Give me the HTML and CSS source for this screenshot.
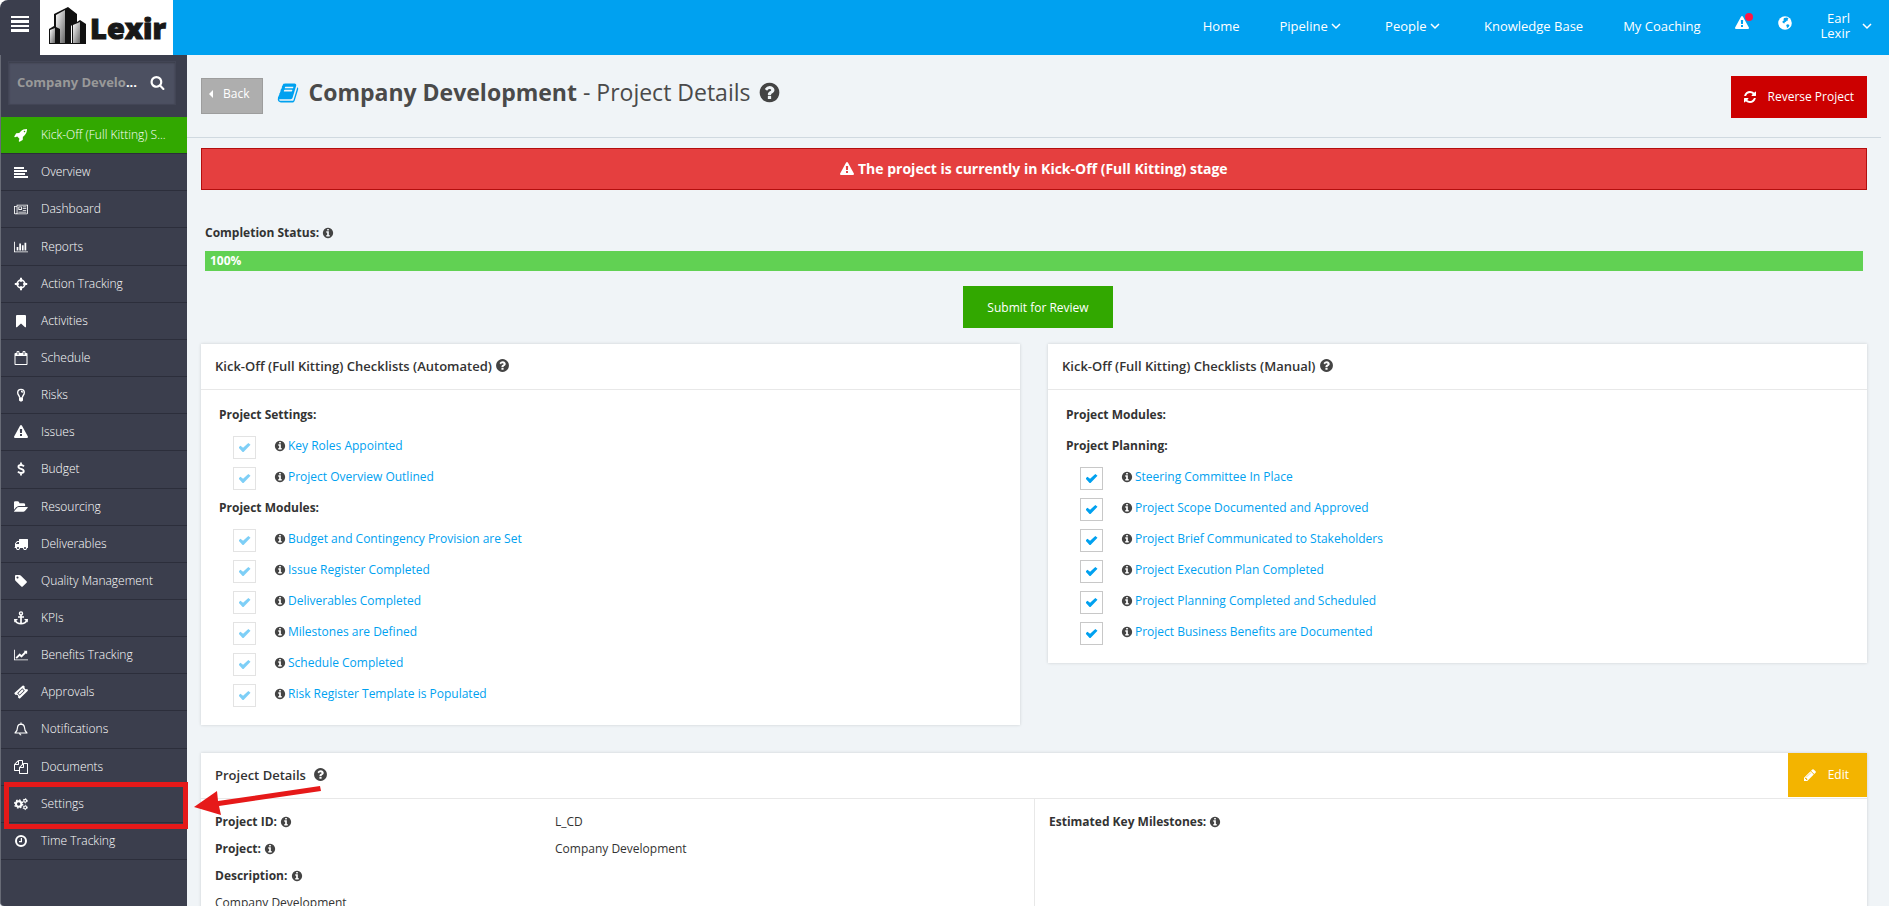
FILE: index.html
```html
<!DOCTYPE html>
<html lang="en">
<head>
    <meta charset="UTF-8">
    <meta name="viewport" content="width=device-width, initial-scale=1.0">
    <title>Company Development - Project Details</title>
    <link rel="stylesheet" href="styles.css">
</head>
<body>

<svg class="sprite" aria-hidden="true">
    <symbol id="search" viewBox="0 0 1792 1792"><path d="M1216 832q0-185-131.5-316.5t-316.5-131.5-316.5 131.5-131.5 316.5 131.5 316.5 316.5 131.5 316.5-131.5 131.5-316.5zm512 832q0 52-38 90t-90 38q-54 0-90-38l-343-342q-179 124-399 124-143 0-273.5-55.5t-225-150-150-225-55.5-273.5 55.5-273.5 150-225 225-150 273.5-55.5 273.5 55.5 225 150 150 225 55.5 273.5q0 220-124 399l343 343q37 37 37 90z"/></symbol>
    <symbol id="question" viewBox="0 0 1792 1792"><path d="M1024 1376v-192q0-14-9-23t-23-9h-192q-14 0-23 9t-9 23v192q0 14 9 23t23 9h192q14 0 23-9t9-23zm256-672q0-88-55.5-163t-138.5-116-170-41q-243 0-371 213-15 24 8 42l132 100q7 6 19 6 16 0 25-12 53-68 86-92 34-24 86-24 48 0 85.5 26t37.5 59q0 38-20 61t-68 45q-63 28-115.5 86.5t-52.5 125.5v36q0 14 9 23t23 9h192q14 0 23-9t9-23q0-19 21.5-49.5t54.5-49.5q32-18 49-28.5t46-35 44.5-48 28-60.5 12.5-81zm384 192q0 209-103 385.5t-279.5 279.5-385.5 103-385.5-103-279.5-279.5-103-385.5 103-385.5 279.5-279.5 385.5-103 385.5 103 279.5 279.5 103 385.5z"/></symbol>
    <symbol id="info" viewBox="0 0 1792 1792"><path d="M1152 1376v-160q0-14-9-23t-23-9h-96v-512q0-14-9-23t-23-9h-320q-14 0-23 9t-9 23v160q0 14 9 23t23 9h96v320h-96q-14 0-23 9t-9 23v160q0 14 9 23t23 9h448q14 0 23-9t9-23zm-128-896v-160q0-14-9-23t-23-9h-192q-14 0-23 9t-9 23v160q0 14 9 23t23 9h192q14 0 23-9t9-23zm640 416q0 209-103 385.5t-279.5 279.5-385.5 103-385.5-103-279.5-279.5-103-385.5 103-385.5 279.5-279.5 385.5-103 385.5 103 279.5 279.5 103 385.5z"/></symbol>
    <symbol id="warning" viewBox="0 0 1792 1792"><path d="M1024 1375v-190q0-14-9.5-23.5t-22.5-9.5h-192q-13 0-22.5 9.5t-9.5 23.5v190q0 14 9.5 23.5t22.5 9.5h192q13 0 22.5-9.5t9.5-23.5zm-2-374l18-459q0-12-10-19-13-11-24-11h-220q-11 0-24 11-10 7-10 21l17 457q0 10 10 16.5t24 6.5h185q14 0 23.5-6.5t10.5-16.5zm-14-934l768 1408q35 63-2 126-17 29-46.5 46t-63.5 17h-1536q-34 0-63.5-17t-46.5-46q-37-63-2-126l768-1408q17-31 47-49t65-18 65 18 47 49z"/></symbol>
    <symbol id="refresh" viewBox="0 0 1792 1792"><path d="M1639 1056q0 5-1 7-64 268-268 434.5t-478 166.5q-146 0-282.5-55t-243.5-157l-129 129q-19 19-45 19t-45-19-19-45v-448q0-26 19-45t45-19h448q26 0 45 19t19 45-19 45l-137 137q71 66 161 102t187 36q134 0 250-65t186-179q11-17 53-117 8-23 30-23h192q13 0 22.5 9.5t9.5 22.5zm25-800v448q0 26-19 45t-45 19h-448q-26 0-45-19t-19-45 19-45l138-138q-148-137-349-137-134 0-250 65t-186 179q-11 17-53 117-8 23-30 23h-199q-13 0-22.5-9.5t-9.5-22.5v-7q65-268 270-434.5t480-166.5q146 0 284 55.5t245 156.5l130-129q19-19 45-19t45 19 19 45z"/></symbol>
    <symbol id="pencil" viewBox="0 0 1792 1792"><path d="M491 1536l91-91-235-235-91 91v107h128v128h107zm523-928q0-22-22-22-10 0-17 7l-542 542q-7 7-7 17 0 22 22 22 10 0 17-7l542-542q7-7 7-17zm-54-192l416 416-832 832h-416v-416zm683 96q0 53-37 90l-166 166-416-416 166-165q36-38 90-38 53 0 91 38l235 234q37 39 37 91z"/></symbol>
    <symbol id="book" viewBox="0 0 1792 1792"><path d="M1703 478q40 57 18 129l-275 906q-19 64-76.5 107.5t-122.5 43.5h-923q-77 0-148.5-53.5t-99.5-131.5q-24-67-2-127 0-4 3-27t4-37q1-8-3-21.5t-3-19.5q2-11 8-21t16.5-23.5 16.5-23.5q23-38 45-91.5t30-91.5q3-10 .5-30t-.5-28q3-11 17-28t17-23q21-36 42-92t25-90q1-9-2.5-32t.5-28q4-13 22-30.5t22-22.5q19-26 42.5-84.5t27.5-96.5q1-8-3-25.5t-2-26.5q2-8 9-18t18-23 17-21q8-12 16.5-30.5t15-35 16-36 19.5-32 26.5-23.5 36-11.5 47.5 5.5l-1 3q38-9 51-9h761q74 0 114 56t18 130l-274 906q-36 119-71.5 153.5t-128.5 34.5h-869q-27 0-38 15-11 16-1 43 24 70 144 70h923q29 0 56-15.5t35-41.5l300-987q7-22 5-57 38 15 59 43zm-1064 2q-4 13 2 22.5t20 9.5h608q13 0 25.5-9.5t16.5-22.5l21-64q4-13-2-22.5t-20-9.5h-608q-13 0-25.5 9.5t-16.5 22.5zm-83 256q-4 13 2 22.5t20 9.5h608q13 0 25.5-9.5t16.5-22.5l21-64q4-13-2-22.5t-20-9.5h-608q-13 0-25.5 9.5t-16.5 22.5z"/></symbol>
    <symbol id="rocket" viewBox="0 0 1792 1792"><path d="M1440 448q0-40-28-68t-68-28-68 28-28 68 28 68 68 28 68-28 28-68zm224-288q0 249-75.5 430.5t-253.5 360.5q-81 80-195 176l-20 379q-2 16-16 26l-384 224q-7 4-16 4-12 0-23-9l-64-64q-13-14-8-32l85-276-281-281-276 85q-3 1-9 1-14 0-23-9l-64-64q-17-19-5-39l224-384q10-14 26-16l379-20q96-114 176-195 188-187 358-258t431-71q14 0 24 9.5t10 22.5z"/></symbol>
    <symbol id="align-left" viewBox="0 0 14 14"><path d="M0 2h10v2H0zM0 5h13v2H0zM0 8h11v2H0zM0 11h14v2H0z"/></symbol>
    <symbol id="newspaper" viewBox="0 0 16 14"><path fill-rule="evenodd" d="M3 2h13v9.500q0 1.500-1.500 1.500h-13q-1.500 0-1.500-1.500V3.500h3zM4 3v9h11V3zM1 4.500v7q0 .5 1 .5t1-.5v-7zM5 4h4v4H5zM6 5v2h2V5zM10 4h4v1h-4zM10 6h4v1h-4zM10 8h4v1h-4zM5 10h9v1H5z"/></symbol>
    <symbol id="bar-chart" viewBox="0 0 2048 1792"><path d="M640 896v512h-256v-512h256zm384-512v1024h-256v-1024h256zm1024 1152v128h-2048v-1536h128v1408h1920zm-640-896v768h-256v-768h256zm384-384v1152h-256v-1152h256z"/></symbol>
    <symbol id="crosshairs" viewBox="0 0 14 14"><circle cx="7" cy="7" r="3.800" fill="none" stroke="currentColor" stroke-width="1.700"/><path d="M6 .8h2v4H6zM6 9.200h2v4H6zM.8 6h4v2h-4zM9.200 6h4v2h-4z"/></symbol>
    <symbol id="bookmark" viewBox="0 0 14 14"><path d="M3 1h8q1 0 1 1v11q-.5.600-1.200 0L7 9.500 3.200 13q-.7.600-1.200 0V2q0-1 1-1z"/></symbol>
    <symbol id="calendar" viewBox="0 0 1792 1792"><path d="M192 1664h1408v-1024h-1408v1024zm384-1216v-288q0-14-9-23t-23-9h-64q-14 0-23 9t-9 23v288q0 14 9 23t23 9h64q14 0 23-9t9-23zm768 0v-288q0-14-9-23t-23-9h-64q-14 0-23 9t-9 23v288q0 14 9 23t23 9h64q14 0 23-9t9-23zm384-64v1280q0 52-38 90t-90 38h-1408q-52 0-90-38t-38-90v-1280q0-52 38-90t90-38h128v-96q0-66 47-113t113-47h64q66 0 113 47t47 113v96h384v-96q0-66 47-113t113-47h64q66 0 113 47t47 113v96h128q52 0 90 38t38 90z"/></symbol>
    <symbol id="bulb" viewBox="0 0 14 14"><path fill="none" stroke="currentColor" stroke-width="1.400" d="M5.600 9.500C5.600 7.500 3.700 7 3.700 4.700a3.300 3.300 0 0 1 6.600 0C10.300 7 8.400 7.500 8.400 9.500M7 3.300q1.400 0 1.500 1.300"/><path d="M5 9.200h4v3.300L7.800 13.500H6.200L5 12.500z"/></symbol>
    <symbol id="dollar" viewBox="0 0 14 14"><path fill="none" stroke="currentColor" stroke-width="1.800" d="M10 4.300Q8.700 3 7 3 4.400 3 4.400 4.800 4.400 6.300 7 6.900 9.800 7.600 9.800 9.300 9.800 11 7 11 5.200 11 3.900 9.700M7 .5v2.500M7 11v2.500"/></symbol>
    <symbol id="folder" viewBox="0 0 1850 1792"><path d="M1815 952q0 31-31 66l-336 396q-43 51-120.500 86.500t-143.500 35.500h-1088q-34 0-60.500-13t-26.500-43q0-31 31-66l336-396q43-51 120.500-86.500t143.500-35.500h1088q34 0 60.500 13t26.500 43zm-343-344v160h-832q-94 0-197 47.500t-164 119.500l-337 396-5 6q0-4-.5-12.500t-.5-12.500v-960q0-92 66-158t158-66h320q92 0 158 66t66 158v32h544q92 0 158 66t66 158z"/></symbol>
    <symbol id="truck" viewBox="0 0 1792 1792"><path d="M640 1408q0-52-38-90t-90-38-90 38-38 90 38 90 90 38 90-38 38-90zm-384-512h384v-256h-158q-13 0-22 9l-195 195q-9 9-9 22v30zm1280 512q0-52-38-90t-90-38-90 38-38 90 38 90 90 38 90-38 38-90zm256-1088v1024q0 15-4 26.500t-13.500 18.500-16.500 11.500-23.500 6-22.500 2-25.500 0-22.500-.5q0 106-75 181t-181 75-181-75-75-181h-384q0 106-75 181t-181 75-181-75-75-181h-64q-3 0-22.500.5t-25.500 0-22.500-2-23.500-6-16.500-11.500-13.500-18.500-4-26.500q0-26 19-45t45-19v-320q0-8-.5-35t0-38 2.500-34.500 6.500-37 14-30.500 22.500-30l198-198q19-19 50.500-32t58.500-13h160v-192q0-26 19-45t45-19h1024q26 0 45 19t19 45z"/></symbol>
    <symbol id="tag" viewBox="0 0 1792 1792"><path d="M576 448q0-53-37.500-90.500t-90.500-37.500-90.500 37.500-37.500 90.500 37.500 90.500 90.500 37.500 90.500-37.500 37.500-90.500zm1067 576q0 53-37 90l-491 492q-39 37-91 37-53 0-90-37l-715-716q-38-37-64.500-101t-26.500-117v-416q0-52 38-90t90-38h416q53 0 117 26.500t102 64.500l715 714q37 39 37 91z"/></symbol>
    <symbol id="anchor" viewBox="0 0 14 14"><path fill="none" stroke="currentColor" stroke-width="1.700" d="M7 4v8.500M4 6h6M1.500 9.500Q2.500 12.700 7 12.700T12.500 9.500"/><circle cx="7" cy="2.400" r="1.500" fill="none" stroke="currentColor" stroke-width="1.400"/><path d="M0 8h4L.3 11.600zM14 8h-4l3.700 3.600z"/></symbol>
    <symbol id="line-chart" viewBox="0 0 2048 1792"><path d="M2048 1536v128h-2048v-1536h128v1408h1920zm-128-1248v435q0 21-19.500 29.500t-35.500-7.500l-121-121-633 633q-10 10-23 10t-23-10l-233-233-416 416-192-192 585-585q10-10 23-10t23 10l233 233 464-464-121-121q-16-16-7.500-35.500t29.500-19.500h435q14 0 23 9t9 23z"/></symbol>
    <symbol id="ticket" viewBox="0 0 14 14"><path fill-rule="evenodd" d="M8.500.7q.7-.6 1.300 0l1 1q-.7 1.100.2 2t2 .2l.6.700q.6.600 0 1.300L6.200 13.300q-.7.600-1.300 0l-1-1q.7-1.100-.2-2t-2-.2l-1-1q-.6-.6 0-1.300zM8.300 3.200L3.200 8.300l2.500 2.500 5.100-5.100zM8.300 4.300l1.400 1.400-4 4-1.400-1.400z"/></symbol>
    <symbol id="bell" viewBox="0 0 14 14"><path fill="none" stroke="currentColor" stroke-width="1.200" stroke-linejoin="round" d="M1 11h12Q10.500 9 10.500 5.500 10.200 2.300 7 2.100 3.800 2.300 3.500 5.500 3.500 9 1 11zM5.700 11.500q.2 1.500 1.500 1.500M7 2V.6"/></symbol>
    <symbol id="files" viewBox="0 0 1792 1792"><path d="M1696 384q40 0 68 28t28 68v1216q0 40-28 68t-68 28h-960q-40 0-68-28t-28-68v-288h-544q-40 0-68-28t-28-68v-672q0-40 20-88t48-76l408-408q28-28 76-48t88-20h416q40 0 68 28t28 68v328q68-40 128-40h416zm-544 213l-299 299h299v-299zm-640-384l-299 299h299v-299zm196 647l316-316v-416h-384v416q0 40-28 68t-68 28h-416v640h512v-256q0-40 20-88t48-76zm956 804v-1152h-384v416q0 40-28 68t-68 28h-416v640h896z"/></symbol>
    <symbol id="cogs" viewBox="0 0 15 14"><g fill="none" stroke="currentColor"><circle cx="5" cy="7" r="2.900" stroke-width="2.200"/><circle cx="5" cy="7" r="4.300" stroke-width="1.400" stroke-dasharray="1.700 1.677"/><circle cx="12" cy="3.500" r="1.500" stroke-width="1.200"/><circle cx="12" cy="3.500" r="2.300" stroke-width="1" stroke-dasharray="1.200 1.209"/><circle cx="12" cy="10.700" r="1.500" stroke-width="1.200"/><circle cx="12" cy="10.700" r="2.300" stroke-width="1" stroke-dasharray="1.200 1.209"/></g></symbol>
    <symbol id="clock" viewBox="0 0 14 14"><circle cx="7" cy="7" r="5" fill="none" stroke="currentColor" stroke-width="2"/><path fill="none" stroke="currentColor" stroke-width="1.200" d="M7.400 4v3.600H5"/></symbol>
    <symbol id="globe" viewBox="0 0 14 14"><circle cx="7" cy="7" r="6.800"/><path fill="#00a1f0" d="M6 2l3-.6 1.500 1-.8.800.3 1.200-1.400.4-.6 1-1.400.4.200 1H5.600L4.400 6.200l.3-1.200 1.200-.6L5.500 3.300zM8.500 8.800l1.400-.6 1.500.7-.4 1.500-1.400 1.400-.6.500-.2-1.500-.6-1.200z"/></symbol>
    <symbol id="chevron" viewBox="0 0 10 10"><path fill="none" stroke="currentColor" stroke-width="1.500" d="M1 3l4 4 4-4"/></symbol>
    <symbol id="caret" viewBox="0 0 6 10"><path d="M5 1v8L1 5z"/></symbol>
    <symbol id="menu" viewBox="0 0 18 16"><path d="M0 0h18v2H0zM0 4h18v3H0zM0 9h18v2H0zM0 13h18v3H0z"/></symbol>
</svg>

<header class="topbar">
    <button class="menu-toggle" aria-label="Toggle menu"><svg><use href="#menu"/></svg></button>
    <a class="logo" href="#">
        <svg class="logo-mark" viewBox="0 0 38 38" aria-hidden="true">
            <defs>
                <linearGradient id="steel" x1="0" y1="0" x2="1" y2="1">
                    <stop offset="0" stop-color="#fff"/>
                    <stop offset="1" stop-color="#666"/>
                </linearGradient>
            </defs>
            <path fill="#111" d="M5 7L19 0l9 7v8l3-2 6 4v20H5z"/>
            <path fill="url(#steel)" d="M7 8l9-5v33H7z"/>
            <path fill="#111" d="M0 22l5-3 6 3v15H0z"/>
            <path fill="url(#steel)" d="M1 23l5-2v15H1z"/>
            <path fill="#fff" d="M22 36h1V18l-1 1z"/>
            <path fill="url(#steel)" d="M24 18l7-3v21h-7z"/>
        </svg>
        <span class="logo-text">Lexir</span>
    </a>
    <nav class="topnav">
        <a href="#">Home</a>
        <a class="has-menu" href="#">Pipeline <svg class="chevron"><use href="#chevron"/></svg></a>
        <a class="has-menu" href="#">People <svg class="chevron"><use href="#chevron"/></svg></a>
        <a href="#">Knowledge Base</a>
        <a href="#">My Coaching</a>
    </nav>
    <div class="top-tools">
        <a class="alerts" href="#" aria-label="Alerts"><svg class="icon"><use href="#warning"/></svg><span class="dot"></span></a>
        <a href="#" aria-label="Language"><svg class="icon"><use href="#globe"/></svg></a>
        <a class="user" href="#"><span>Earl<br>Lexir</span><svg class="chevron"><use href="#chevron"/></svg></a>
    </div>
</header>

<div class="layout">
    <aside class="sidebar">
        <form class="search">
            <button type="button" class="project-pick"><span>Company Develo</span>...</button>
            <button type="button" class="search-btn" aria-label="Search"><svg><use href="#search"/></svg></button>
        </form>
        <ul class="side-menu">
            <li class="stage"><a href="#"><svg class="icon"><use href="#rocket"/></svg>Kick-Off (Full Kitting) S...</a></li>
            <li><a href="#"><svg class="icon"><use href="#align-left"/></svg>Overview</a></li>
            <li><a href="#"><svg class="icon"><use href="#newspaper"/></svg>Dashboard</a></li>
            <li><a href="#"><svg class="icon"><use href="#bar-chart"/></svg>Reports</a></li>
            <li><a href="#"><svg class="icon"><use href="#crosshairs"/></svg>Action Tracking</a></li>
            <li><a href="#"><svg class="icon"><use href="#bookmark"/></svg>Activities</a></li>
            <li><a href="#"><svg class="icon"><use href="#calendar"/></svg>Schedule</a></li>
            <li><a href="#"><svg class="icon"><use href="#bulb"/></svg>Risks</a></li>
            <li><a href="#"><svg class="icon"><use href="#warning"/></svg>Issues</a></li>
            <li><a href="#"><svg class="icon"><use href="#dollar"/></svg>Budget</a></li>
            <li><a href="#"><svg class="icon"><use href="#folder"/></svg>Resourcing</a></li>
            <li><a href="#"><svg class="icon"><use href="#truck"/></svg>Deliverables</a></li>
            <li><a href="#"><svg class="icon"><use href="#tag"/></svg>Quality Management</a></li>
            <li><a href="#"><svg class="icon"><use href="#anchor"/></svg>KPIs</a></li>
            <li><a href="#"><svg class="icon"><use href="#line-chart"/></svg>Benefits Tracking</a></li>
            <li><a href="#"><svg class="icon"><use href="#ticket"/></svg>Approvals</a></li>
            <li><a href="#"><svg class="icon"><use href="#bell"/></svg>Notifications</a></li>
            <li><a href="#"><svg class="icon"><use href="#files"/></svg>Documents</a></li>
            <li class="marked"><a href="#"><svg class="icon"><use href="#cogs"/></svg>Settings</a>
                <svg class="arrow" viewBox="0 0 128 36" aria-hidden="true"><path d="M0 21L23 5l1 10L126 0l1 5L25 20l2 9z"/></svg>
            </li>
            <li><a href="#"><svg class="icon"><use href="#clock"/></svg>Time Tracking</a></li>
        </ul>
    </aside>

    <main class="content">
        <div class="page-head">
            <a class="btn-back" href="#"><svg><use href="#caret"/></svg>Back</a>
            <h1><svg class="book"><use href="#book"/></svg><strong>Company Development</strong> - Project Details <svg class="help"><use href="#question"/></svg></h1>
            <button class="btn btn-red"><svg class="icon"><use href="#refresh"/></svg>Reverse Project</button>
        </div>

        <div class="page-body">
            <div class="alert"><svg class="icon"><use href="#warning"/></svg> The project is currently in Kick-Off (Full Kitting) stage</div>

            <div class="status">
                <p class="label">Completion Status: <svg class="info"><use href="#info"/></svg></p>
                <div class="progress"><div class="progress-bar" style="width: 100%">100%</div></div>
            </div>
            <div class="actions">
                <button class="btn btn-green">Submit for Review</button>
            </div>

            <div class="checklists">
                <section class="panel">
                    <h2>Kick-Off (Full Kitting) Checklists (Automated) <svg class="help"><use href="#question"/></svg></h2>
                    <div class="checks">
                        <h3>Project Settings:</h3>
                        <div class="check"><input type="checkbox" aria-labelledby="a1" checked disabled><svg class="info"><use href="#info"/></svg><a id="a1" href="#">Key Roles Appointed</a></div>
                        <div class="check"><input type="checkbox" aria-labelledby="a2" checked disabled><svg class="info"><use href="#info"/></svg><a id="a2" href="#">Project Overview Outlined</a></div>
                        <h3>Project Modules:</h3>
                        <div class="check"><input type="checkbox" aria-labelledby="a3" checked disabled><svg class="info"><use href="#info"/></svg><a id="a3" href="#">Budget and Contingency Provision are Set</a></div>
                        <div class="check"><input type="checkbox" aria-labelledby="a4" checked disabled><svg class="info"><use href="#info"/></svg><a id="a4" href="#">Issue Register Completed</a></div>
                        <div class="check"><input type="checkbox" aria-labelledby="a5" checked disabled><svg class="info"><use href="#info"/></svg><a id="a5" href="#">Deliverables Completed</a></div>
                        <div class="check"><input type="checkbox" aria-labelledby="a6" checked disabled><svg class="info"><use href="#info"/></svg><a id="a6" href="#">Milestones are Defined</a></div>
                        <div class="check"><input type="checkbox" aria-labelledby="a7" checked disabled><svg class="info"><use href="#info"/></svg><a id="a7" href="#">Schedule Completed</a></div>
                        <div class="check"><input type="checkbox" aria-labelledby="a8" checked disabled><svg class="info"><use href="#info"/></svg><a id="a8" href="#">Risk Register Template is Populated</a></div>
                    </div>
                </section>

                <section class="panel">
                    <h2>Kick-Off (Full Kitting) Checklists (Manual) <svg class="help"><use href="#question"/></svg></h2>
                    <div class="checks">
                        <h3>Project Modules:</h3>
                        <h3>Project Planning:</h3>
                        <div class="check"><input type="checkbox" aria-labelledby="m1" checked><svg class="info"><use href="#info"/></svg><a id="m1" href="#">Steering Committee In Place</a></div>
                        <div class="check"><input type="checkbox" aria-labelledby="m2" checked><svg class="info"><use href="#info"/></svg><a id="m2" href="#">Project Scope Documented and Approved</a></div>
                        <div class="check"><input type="checkbox" aria-labelledby="m3" checked><svg class="info"><use href="#info"/></svg><a id="m3" href="#">Project Brief Communicated to Stakeholders</a></div>
                        <div class="check"><input type="checkbox" aria-labelledby="m4" checked><svg class="info"><use href="#info"/></svg><a id="m4" href="#">Project Execution Plan Completed</a></div>
                        <div class="check"><input type="checkbox" aria-labelledby="m5" checked><svg class="info"><use href="#info"/></svg><a id="m5" href="#">Project Planning Completed and Scheduled</a></div>
                        <div class="check"><input type="checkbox" aria-labelledby="m6" checked><svg class="info"><use href="#info"/></svg><a id="m6" href="#">Project Business Benefits are Documented</a></div>
                    </div>
                </section>
            </div>

            <section class="panel details">
                <div class="panel-head">
                    <h2>Project Details &nbsp;<svg class="help"><use href="#question"/></svg></h2>
                    <button class="btn btn-yellow"><svg class="icon"><use href="#pencil"/></svg>Edit</button>
                </div>
                <div class="detail-cols">
                    <dl>
                        <div><dt>Project ID: <svg class="info"><use href="#info"/></svg></dt><dd>L_CD</dd></div>
                        <div><dt>Project: <svg class="info"><use href="#info"/></svg></dt><dd>Company Development</dd></div>
                        <div><dt>Description: <svg class="info"><use href="#info"/></svg></dt></div>
                        <div><dd>Company Development</dd></div>
                    </dl>
                    <dl>
                        <div><dt>Estimated Key Milestones: <svg class="info"><use href="#info"/></svg></dt></div>
                    </dl>
                </div>
            </section>
        </div>
    </main>
</div>

</body>
</html>
```
FILE: styles.css
```css
* {
    box-sizing: border-box;
    margin: 0;
    padding: 0;
}

html {
    background: #fff;
}

body {
    font-family: "Open Sans", sans-serif;
    font-size: 12px;
    line-height: 20px;
    color: #333;
    background: #f0f4f7;
    height: 100vh;
    margin-right: 3px;
    overflow: hidden;
    display: flex;
    flex-direction: column;
}

a {
    color: #00a1f0;
    text-decoration: none;
}

button {
    font: inherit;
    border: none;
    cursor: pointer;
}

svg {
    fill: currentColor;
    flex-shrink: 0;
}

.sprite {
    display: none;
}

.icon {
    width: 14px;
    height: 14px;
}

.chevron {
    width: 10px;
    height: 10px;
}

.info {
    width: 12px;
    height: 12px;
    color: #444;
    vertical-align: -2px;
}

.help {
    width: 15px;
    height: 15px;
    color: #444;
    vertical-align: -2px;
}

/* Top bar */
.topbar {
    display: flex;
    align-items: center;
    height: 55px;
    flex-shrink: 0;
    background: linear-gradient(90deg, #fff 40px, #00a1f0 40px);
    color: #fff;
}

.topbar a {
    color: #fff;
}

.menu-toggle {
    width: 40px;
    height: 55px;
    background: #3b3e4d;
    border-top-left-radius: 8px;
    color: #fff;
    padding: 0 0 8px;
}

.menu-toggle svg {
    width: 18px;
    height: 16px;
    vertical-align: middle;
}

.logo {
    display: flex;
    align-items: center;
    gap: 3px;
    width: 133px;
    height: 55px;
    padding: 0 9px 4px;
    background: #fff;
}

.logo-mark {
    width: 38px;
    height: 38px;
}

.topbar .logo-text {
    color: #181818;
    font-size: 29px;
    font-weight: 800;
    line-height: 50px;
    padding-top: 4px;
    -webkit-text-stroke: 1px #181818;
}

.topnav {
    display: flex;
    gap: 40px;
    margin-left: auto;
    padding-bottom: 3px;
    font-size: 13px;
    font-weight: 500;
}

.topnav .has-menu {
    padding-right: 4px;
}

.topnav .chevron {
    vertical-align: 0;
}

.top-tools {
    display: flex;
    align-items: center;
    gap: 29px;
    padding: 0 17px 3px 34px;
}

.alerts {
    position: relative;
}

.dot {
    position: absolute;
    top: -3px;
    right: -4px;
    width: 8px;
    height: 8px;
    border-radius: 50%;
    background: #ff1744;
}

.user {
    display: flex;
    align-items: center;
    gap: 12px;
    text-align: right;
    font-size: 13px;
    line-height: 15px;
}

/* Sidebar */
.layout {
    flex: 1;
    display: flex;
    min-height: 0;
}

.sidebar {
    width: 187px;
    flex-shrink: 0;
    background: #3b3e4d;
    border-left: 1px solid #686b76;
    border-bottom-left-radius: 4px;
}

.search {
    display: flex;
    align-items: center;
    justify-content: space-between;
    height: 44px;
    margin: 6px 11px 12px 7px;
    padding: 0 10px 2px 8px;
    background: #4c5061;
    border: 1px solid #424555;
    box-shadow: inset 0 1px 2px #393c4a;
}

.project-pick {
    background: none;
    color: #fff;
    font-weight: bold;
    font-size: 13px;
    white-space: nowrap;
}

.project-pick span {
    color: #999;
}

.search-btn {
    background: none;
    color: #fff;
}

.search-btn svg {
    width: 15px;
    height: 15px;
    vertical-align: middle;
}

.side-menu {
    list-style: none;
    display: grid;
    grid-template-rows: repeat(20, 1fr);
    height: 743px;
}

.side-menu li {
    border-bottom: 1px solid #2c2e3b;
    min-width: 0;
}

.side-menu a {
    display: flex;
    align-items: center;
    height: 100%;
    gap: 13px;
    padding: 0 12px 0 13px;
    color: #fff;
    font-weight: 300;
    white-space: nowrap;
}

.side-menu .stage {
    background: #32a800;
}

.marked {
    position: relative;
}

.marked::after {
    content: "";
    position: absolute;
    inset: -4px -1px -7px 3px;
    border: 5px solid #e61919;
}

.arrow {
    position: absolute;
    z-index: 2;
    left: 193px;
    top: 0;
    width: 128px;
    height: 36px;
    color: #e61919;
}

/* Page head */
.content {
    flex: 1;
    min-width: 0;
}

.page-head {
    display: flex;
    align-items: flex-start;
    height: 83px;
    margin-right: 8px;
    padding: 21px 14px 0;
    border-bottom: 1px solid #d0d9e0;
}

.btn-back {
    display: flex;
    align-items: center;
    gap: 9px;
    height: 36px;
    margin-top: 2px;
    padding: 0 13px 5px 6px;
    background: #aeaeae;
    border: 1px solid #9d9d9d;
    color: #fff;
}

.btn-back svg {
    width: 6px;
    height: 10px;
}

h1 {
    flex: 1;
    margin-left: 14px;
    color: #4a4a4a;
    font-size: 23px;
    font-weight: normal;
    line-height: 32px;
}

h1 .book {
    width: 22px;
    height: 22px;
    margin-right: 9px;
    color: #00a1f0;
    vertical-align: -3px;
}

h1 .help {
    width: 23px;
    height: 23px;
    margin-left: 2px;
    vertical-align: -3px;
}

.btn {
    display: flex;
    align-items: center;
    height: 42px;
    color: #fff;
}

.btn-red {
    gap: 11px;
    padding: 0 13px 0 12px;
    background: #c00;
}

.actions {
    display: flex;
    justify-content: center;
    padding: 15px 0 16px 8px;
}

.btn-green {
    padding: 1px 24px 0;
    background: #32a800;
}

.btn-yellow {
    height: 44px;
    gap: 11px;
    padding: 0 18px 0 15px;
    background: #f3b400;
}

/* Page body */
.page-body {
    padding: 10px 22px 0 14px;
}

.alert {
    height: 42px;
    border: 1px solid #b30e0e;
    background: #e53f3f;
    color: #fff;
    font-size: 14px;
    font-weight: bold;
    line-height: 40px;
    text-align: center;
}

.alert .icon {
    vertical-align: -2px;
}

.status {
    padding: 33px 4px 0;
}

.label {
    font-weight: bold;
}

.progress {
    margin-top: 8px;
}

.progress-bar {
    padding-left: 5px;
    background: #61d153;
    color: #fff;
    font-weight: bold;
}

.checklists {
    display: grid;
    grid-template-columns: 1fr 1fr;
    align-items: start;
    gap: 28px;
}

.panel {
    background: #fff;
    box-shadow: 0 0 3px rgba(0, 0, 0, 0.15);
}

h2 {
    height: 46px;
    padding-left: 14px;
    border-bottom: 1px solid #e8e8e8;
    font-size: 13px;
    font-weight: 600;
    line-height: 45px;
}

.checks {
    padding: 9px 18px 16px;
}

h3 {
    font-size: 12px;
    line-height: 31px;
}

.check {
    display: flex;
    align-items: center;
    height: 31px;
    padding-left: 14px;
}

.check input {
    appearance: none;
    display: grid;
    place-items: center;
    width: 23px;
    height: 23px;
    margin: 4px 18px 0 0;
    background: #fff;
    border: 1px solid #c8c8c8;
}

.check input::before {
    content: "";
    width: 12px;
    height: 9px;
    background: #00a1f0;
    clip-path: polygon(0 50%, 16% 30%, 38% 54%, 82% 0, 100% 20%, 42% 100%, 34% 100%);
}

.check input:disabled {
    opacity: 0.5;
}

.check .info {
    margin-right: 2px;
}

.details {
    margin-top: 28px;
}

.panel-head {
    display: flex;
    justify-content: space-between;
    border-bottom: 1px solid #e8e8e8;
}

.panel-head h2 {
    height: 45px;
    border: none;
}

.detail-cols {
    display: grid;
    grid-template-columns: 1fr 1fr;
}

.detail-cols dl {
    padding: 9px 14px;
}

.detail-cols dl + dl {
    border-left: 1px solid #e8e8e8;
}

.detail-cols dl div {
    display: grid;
    grid-template-columns: 340px 1fr;
    line-height: 27px;
}

.detail-cols dt {
    font-weight: bold;
}
```
